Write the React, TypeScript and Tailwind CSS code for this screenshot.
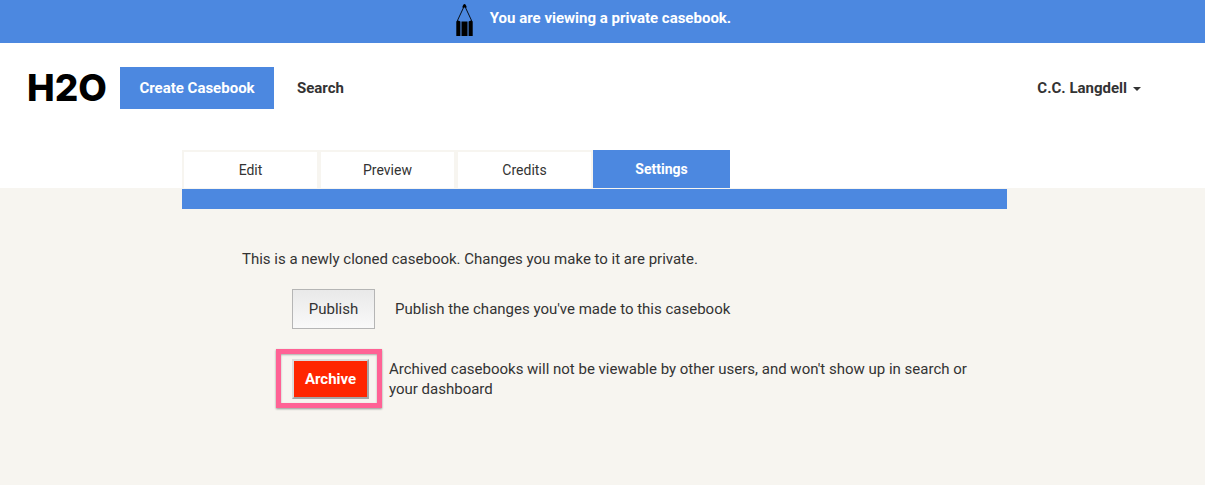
import React from "react";

const tabs = ["Edit", "Preview", "Credits"];

function PencilIcon() {
  return (
    <svg width="18" height="33" viewBox="0 0 18 33" aria-hidden="true" className="shrink-0">
      <path d="M1 17.5 8.5 1.5l7.5 16" fill="none" stroke="#000" strokeWidth="0.9" />
      <path d="M8.5 0C7.6 0 7.2.8 6.2 3.4h4.6C9.8.8 9.4 0 8.5 0z" fill="#000" />
      <path d="M0.3 17.6 2.4 16.6 4.4 17.6V32H0.3zM5.5 17.6H11.5V32H5.5zM12.6 17.6 14.6 16.6 16.7 17.6V32h-4.1z" fill="#000" />
    </svg>
  );
}

function Header() {
  return (
    <header className="flex h-[107px] items-center pt-2.5 pr-16 pb-7 pl-[27px]">
      <a href="#home" className="w-[81px] font-[Inter,sans-serif] text-[37px] leading-10 font-extrabold text-black">
        H2O
      </a>
      <nav className="ml-3 flex items-center">
        <a href="#create" className="flex h-[42px] w-[154px] items-center justify-center bg-[#4c88e0] font-bold text-white">
          Create Casebook
        </a>
        <a href="#search" className="ml-[23px] font-bold">
          Search
        </a>
      </nav>
      <button type="button" className="ml-auto flex items-center gap-1.5 font-bold">
        C.C. Langdell
        <span className="mt-0.5 border-x-4 border-t-4 border-x-transparent border-t-[#333]" />
      </button>
    </header>
  );
}

export default function App() {
  return (
    <div className="min-h-screen bg-[#f7f5f0] font-[Roboto,sans-serif] text-[15px] leading-5 text-[#333]">
      <div className="flex h-[43px] items-start justify-center gap-4 bg-[#4c88e0] pt-1 pr-[18px] font-bold text-white">
        <PencilIcon />
        <p className="pt-1">You are viewing a private casebook.</p>
      </div>

      <div className="bg-white">
        <Header />
        <div className="pr-4">
          <nav className="mx-auto flex w-full max-w-[825px] text-sm">
            {tabs.map((tab) => (
              <a
                key={tab}
                href={"#" + tab.toLowerCase()}
                className="flex h-[38px] w-[137px] items-center justify-center border-2 border-b-0 border-[#f7f5f0]"
              >
                {tab}
              </a>
            ))}
            <a
              href="#settings"
              aria-current="page"
              className="flex h-[38px] w-[137px] items-center justify-center bg-[#4c88e0] font-bold text-white"
            >
              Settings
            </a>
          </nav>
        </div>
      </div>

      <div className="pt-px pr-4">
        <main className="mx-auto w-full max-w-[825px] border-t-20 border-[#4c88e0] pt-10 pr-[30px] pb-16 pl-[60px]">
          <p>This is a newly cloned casebook. Changes you make to it are private.</p>

          <div className="mt-5 ml-[50px] flex items-center gap-5">
            <button
              type="button"
              aria-describedby="publish-note"
              className="h-10 w-[83px] shrink-0 border border-[#b5b5b5] bg-linear-to-b from-[#e9e9e9] to-[#f9f9f9]"
            >
              Publish
            </button>
            <p id="publish-note">Publish the changes you've made to this casebook</p>
          </div>

          <div className="mt-[30px] ml-[50px] flex items-center gap-5">
            <div className="relative shrink-0">
              <button
                type="button"
                aria-describedby="archive-note"
                className="block h-10 w-[77px] border-2 border-t-[#dcdcdc] border-r-[#a5a5a5] border-b-[#a5a5a5] border-l-[#dcdcdc] bg-[#ff2600] font-bold text-white"
              >
                Archive
              </button>
              <span className="pointer-events-none absolute -top-2.5 -right-[13px] -bottom-[9px] -left-4 border-5 border-[#ff6295] shadow-[0_1px_2px_rgba(0,0,0,0.4),inset_0_1px_2px_rgba(0,0,0,0.3)]" />
            </div>
            <p id="archive-note">
              Archived casebooks will not be viewable by other users, and won't show up in search or your dashboard
            </p>
          </div>
        </main>
      </div>
    </div>
  );
}
